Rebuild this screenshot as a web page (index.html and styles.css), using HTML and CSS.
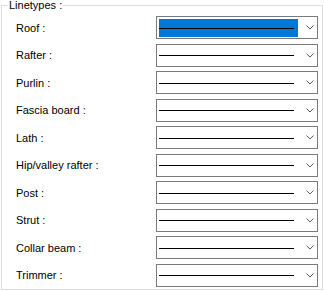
FILE: index.html
```html
<!DOCTYPE html>
<html lang="en">
<head>
    <meta charset="UTF-8">
    <title>Linetypes</title>
    <link rel="stylesheet" href="styles.css">
</head>
<body>
    <fieldset class="group">
        <legend>Linetypes :</legend>
        <div class="rows">
            <label>Roof :</label>
            <div class="combo"><div class="value selected"><span class="line"></span></div><svg class="arrow" width="8" height="5" viewBox="0 0 8 5"><polyline points="0.5,0.5 4,4 7.5,0.5" /></svg></div>

            <label>Rafter :</label>
            <div class="combo"><div class="value"><span class="line"></span></div><svg class="arrow" width="8" height="5" viewBox="0 0 8 5"><polyline points="0.5,0.5 4,4 7.5,0.5" /></svg></div>

            <label>Purlin :</label>
            <div class="combo"><div class="value"><span class="line"></span></div><svg class="arrow" width="8" height="5" viewBox="0 0 8 5"><polyline points="0.5,0.5 4,4 7.5,0.5" /></svg></div>

            <label>Fascia board :</label>
            <div class="combo"><div class="value"><span class="line"></span></div><svg class="arrow" width="8" height="5" viewBox="0 0 8 5"><polyline points="0.5,0.5 4,4 7.5,0.5" /></svg></div>

            <label>Lath :</label>
            <div class="combo"><div class="value"><span class="line"></span></div><svg class="arrow" width="8" height="5" viewBox="0 0 8 5"><polyline points="0.5,0.5 4,4 7.5,0.5" /></svg></div>

            <label>Hip/valley rafter :</label>
            <div class="combo"><div class="value"><span class="line"></span></div><svg class="arrow" width="8" height="5" viewBox="0 0 8 5"><polyline points="0.5,0.5 4,4 7.5,0.5" /></svg></div>

            <label>Post :</label>
            <div class="combo"><div class="value"><span class="line"></span></div><svg class="arrow" width="8" height="5" viewBox="0 0 8 5"><polyline points="0.5,0.5 4,4 7.5,0.5" /></svg></div>

            <label>Strut :</label>
            <div class="combo"><div class="value"><span class="line"></span></div><svg class="arrow" width="8" height="5" viewBox="0 0 8 5"><polyline points="0.5,0.5 4,4 7.5,0.5" /></svg></div>

            <label>Collar beam :</label>
            <div class="combo"><div class="value"><span class="line"></span></div><svg class="arrow" width="8" height="5" viewBox="0 0 8 5"><polyline points="0.5,0.5 4,4 7.5,0.5" /></svg></div>

            <label>Trimmer :</label>
            <div class="combo"><div class="value"><span class="line"></span></div><svg class="arrow" width="8" height="5" viewBox="0 0 8 5"><polyline points="0.5,0.5 4,4 7.5,0.5" /></svg></div>
        </div>
    </fieldset>
</body>
</html>
```
FILE: styles.css
```css
* {
    box-sizing: border-box;
}

body {
    margin: 0;
    background: #ffffff;
    font-family: 'Liberation Sans', Arial, sans-serif;
    font-size: 11px;
    color: #000000;
}

.group {
    margin: 0 1px;
    padding: 5px 4px 2px 14px;
    border: 1px solid #dcdcdc;
    min-width: 0;
}

.group legend {
    margin-left: -8px;
    padding: 0 1px;
    line-height: 11px;
    height: 11px;
}

.rows {
    display: grid;
    grid-template-columns: 140px 162px;
    grid-auto-rows: 23px;
    row-gap: 4.5px;
    align-items: center;
}

.rows label {
    white-space: nowrap;
}

.combo {
    height: 23px;
    border: 1px solid #7a7a7a;
    background: #ffffff;
    display: flex;
    align-items: center;
    padding: 1px 0 1px 2px;
}

.value {
    width: 139px;
    height: 18px;
    display: flex;
    align-items: center;
    margin-top: 1px;
}

.value.selected {
    background: #0078d7;
}

.line {
    display: block;
    width: 135px;
    height: 1px;
    background: #000000;
}

.arrow {
    margin-left: 8px;
    fill: none;
    stroke: #606060;
    stroke-width: 1;
}
```
